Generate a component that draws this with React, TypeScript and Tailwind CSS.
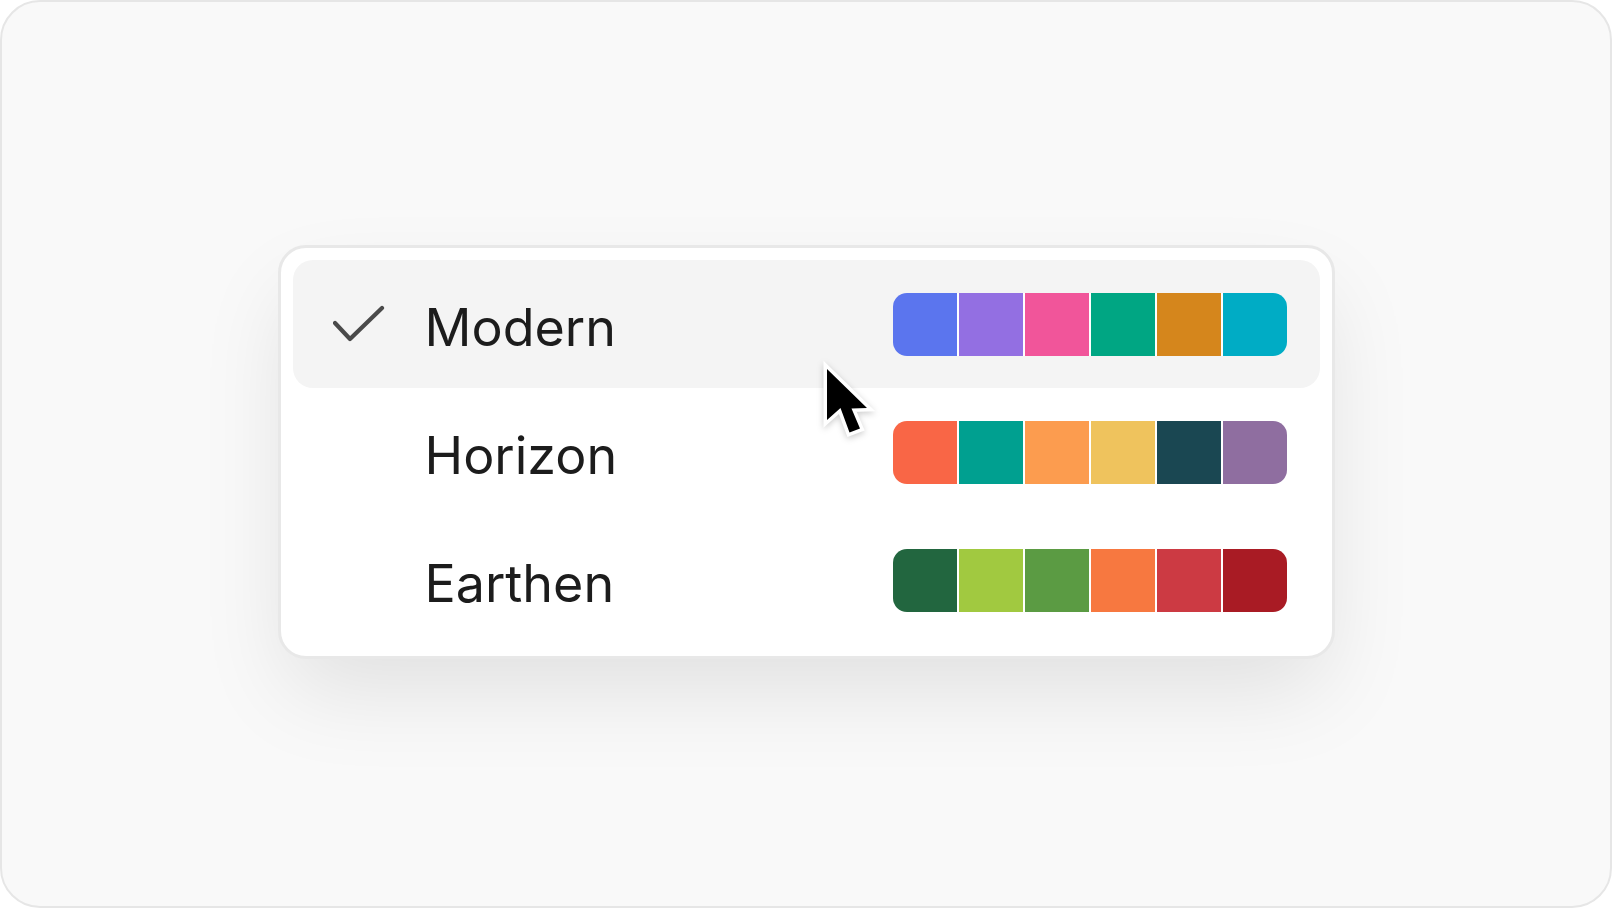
import React from 'react';

// Palette picker dropdown with hover cursor

type Palette = {
  name: string;
  colors: string[];
  selected?: boolean;
};

const palettes: Palette[] = [
  { name: 'Modern', colors: ['#5b75ee', '#936fe2', '#f1559a', '#00a683', '#d5861c', '#00acc5'], selected: true },
  { name: 'Horizon', colors: ['#f96646', '#00a090', '#fc9c4f', '#efc35d', '#1a4752', '#8f6ea0'] },
  { name: 'Earthen', colors: ['#22663f', '#a1c940', '#5b9b43', '#f77840', '#cc3a43', '#a91b24'] },
];

function Check() {
  return (
    <svg width="52" height="40" viewBox="0 0 52 40" fill="none" className="shrink-0">
      <polyline
        points="2,19 17,35 49,4"
        stroke="#4a4a4a"
        strokeWidth="4.2"
        strokeLinecap="round"
        strokeLinejoin="round"
      />
    </svg>
  );
}

function Swatches({ colors }: { colors: string[] }) {
  return (
    <div className="ml-auto flex h-[63px] gap-[2px] overflow-hidden rounded-[14px] bg-white">
      {colors.map((c) => (
        <div key={c} className="h-full w-[64px]" style={{ backgroundColor: c }} />
      ))}
    </div>
  );
}

function Cursor() {
  return (
    <svg
      width="64"
      height="86"
      viewBox="0 0 64 86"
      className="pointer-events-none absolute left-[814px] top-[356px] drop-shadow-[0_2px_3px_rgba(0,0,0,0.2)]"
    >
      <path
        d="M11 11 L11 62 L24.5 50 L33.5 74.5 L44 70.5 L35.5 50.5 L51 50 Z"
        fill="#000"
        stroke="#fff"
        strokeWidth="7"
        strokeLinejoin="miter"
        strokeMiterlimit="3"
        paintOrder="stroke"
      />
    </svg>
  );
}

export default function App() {
  return (
    <div
      className="relative flex h-[908px] w-[1612px] items-center justify-center overflow-hidden rounded-[40px] border-2 border-[#e6e6e6] bg-[#f9f9f9] pb-[4px]"
      style={{ fontFamily: 'Inter, "Noto Sans", sans-serif' }}
    >
      <div className="w-[1057px] rounded-[28px] border-[3px] border-[#e8e8e8] bg-white p-[12px] shadow-[0_40px_90px_-10px_rgba(0,0,0,0.10)]">
        {palettes.map((p) => (
          <div
            key={p.name}
            className={`flex h-[128px] items-center rounded-[20px] pl-[40px] pr-[33px] ${
              p.selected ? 'bg-[#f4f4f4]' : ''
            }`}
          >
            <div className="w-[92px]">{p.selected && <Check />}</div>
            <span className="pt-[7px] text-[52px] leading-none text-[#1c1c1c]">{p.name}</span>
            <Swatches colors={p.colors} />
          </div>
        ))}
      </div>
      <Cursor />
    </div>
  );
}
